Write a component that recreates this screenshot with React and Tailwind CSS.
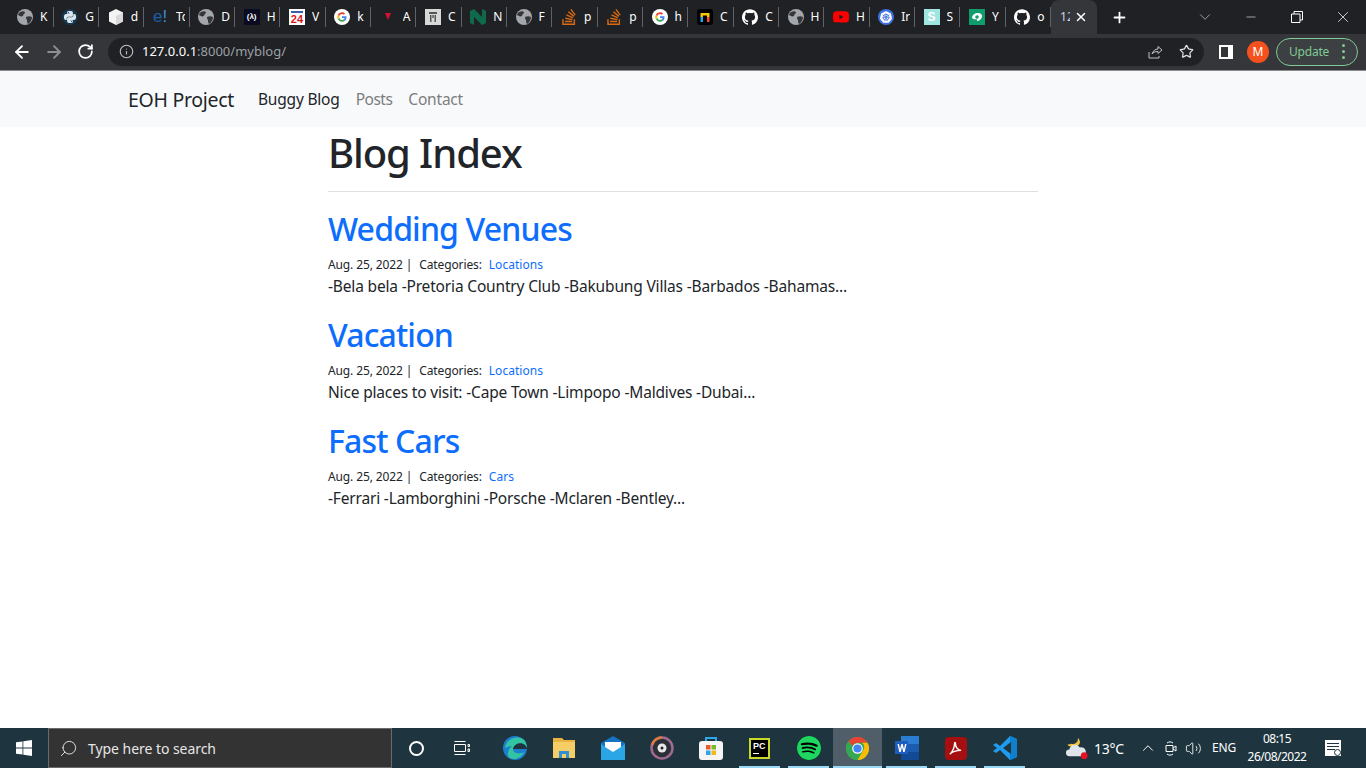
import React from 'react';
import { ArrowLeft, ArrowRight, RotateCw, Info, Star, ChevronDown, Minus, X, Plus, Search, ChevronUp, Volume2 } from 'lucide-react';
import { SiGithub, SiPython, SiStackoverflow, SiYoutube, SiKubernetes, SiSpotify } from 'react-icons/si';

const Globe = () => (
  <svg viewBox="0 0 16 16" className="h-4 w-4">
    <circle cx="8" cy="8" r="8" fill="#a3a6ab" />
    <path d="M3 3c2-1 4-1 5 0 0 2-2 2-2 4-2 1-3 0-5-1 0-1 1-2 2-3zM9 8c2-1 4-1 6 0 0 3-2 6-4 7-1-1-1-3-1-4-1-1-1-2-1-3z" fill="#35363a" />
  </svg>
);
const GoogleG = () => (
  <svg viewBox="0 0 16 16" className="h-4 w-4">
    <circle cx="8" cy="8" r="8" fill="#fff" />
    <path d="M12.5 8.2c0-.4 0-.7-.1-1H8v1.9h2.6c-.1.6-.5 1.1-1 1.5l1.5 1.2c.9-.9 1.4-2.1 1.4-3.6z" fill="#4285f4" />
    <path d="M8 12.8c1.3 0 2.3-.4 3.1-1.2l-1.5-1.2c-.4.3-1 .5-1.6.5-1.2 0-2.3-.8-2.6-2l-1.6 1.2c.8 1.6 2.4 2.7 4.2 2.7z" fill="#34a853" />
    <path d="M5.4 8.9c-.2-.6-.2-1.2 0-1.8L3.8 5.9c-.7 1.3-.7 2.9 0 4.2z" fill="#fbbc05" />
    <path d="M8 5.1c.7 0 1.3.2 1.8.7l1.3-1.3C10.3 3.700 9.200 3.200 8 3.200c-1.800 0-3.400 1.100-4.200 2.700l1.600 1.200c.3-1.200 1.400-2 2.600-2z" fill="#ea4335" />
  </svg>
);
const Cube = () => (
  <svg viewBox="0 0 16 16" className="h-4 w-4">
    <path d="M8 0l7 3.500v9L8 16l-7-3.500v-9z" fill="#f4f4f4" />
    <path d="M8 7l7-3.500v9L8 16z" fill="#d9d9d9" />
  </svg>
);
const Python = () => (
  <span className="flex h-4 w-4 items-center justify-center rounded-full bg-[#17374c]">
    <SiPython className="h-3 w-3 text-[#dbe7ef]" />
  </span>
);
const Eio = () => <span className="w-4 font-['Liberation_Sans',sans-serif] text-[17px] leading-4 text-[#1d5fa8]">e<span className="text-[#3f8fd2]">!</span></span>;
const Fcc = () => <span className="flex h-4 w-4 items-center justify-center bg-[#0a0a23] font-['Liberation_Sans',sans-serif] text-[8px] font-bold text-white">(λ)</span>;
const News24 = () => (
  <span className="flex h-4 w-4 flex-col items-center bg-white font-['Liberation_Sans',sans-serif] text-[11px] font-bold leading-[11px] text-[#d71920]">
    <span className="mb-px mt-[2px] h-[2px] w-3 bg-[#3a5fa8]" />24
  </span>
);
const RedMark = () => (
  <svg viewBox="0 0 16 16" className="h-4 w-4"><path d="M5 4h6l-3 7z" fill="#d5122f" /></svg>
);
const Mono = () => (
  <svg viewBox="0 0 16 16" className="h-4 w-4">
    <rect width="16" height="16" fill="#d8d8d8" />
    <path d="M4 3h8v2H4zM5 6h1.500v7H5zM9.500 6H11v7H9.500zM7.300 6h1.400v3H7.300z" fill="#555" />
  </svg>
);
const Nedbank = () => (
  <svg viewBox="0 0 16 16" className="h-4 w-4">
    <path d="M0 2l4-2 8 8V0l4 2v12l-4 2-8-8v8l-4-2z" fill="#0f6a4b" />
  </svg>
);
const Ninja = () => (
  <svg viewBox="0 0 16 16" className="h-4 w-4">
    <rect width="16" height="16" rx="3" fill="#000" />
    <path d="M3.500 8V4h9v4H10V6.500H6V8z" fill="#f7c600" />
    <path d="M3.500 13V8H6v5z" fill="#2aa7e0" />
    <path d="M10 13V8h2.500v5z" fill="#ef4d3c" />
  </svg>
);
const Kube = () => (
  <span className="flex h-4 w-4 items-center justify-center rounded-full bg-[#3d6fe0]">
    <SiKubernetes className="h-3 w-3 text-white" />
  </span>
);
const Sq = () => <span className="flex h-4 w-4 items-center justify-center bg-[#9fe6e0] font-['Liberation_Sans',sans-serif] text-xs font-bold text-white">S</span>;
const Yw = () => (
  <svg viewBox="0 0 16 16" className="h-4 w-4">
    <rect width="16" height="16" fill="#0f9d6c" />
    <path d="M3 9c0-3 3-5 6-5s4 2 4 3c0 3-3 5-5 5 0-1 0-2-1-2-1 1-3 0-4-1z" fill="#fff" />
    <circle cx="8" cy="8" r="1.800" fill="#0f9d6c" />
  </svg>
);
const Gh = () => <SiGithub className="h-4 w-4 text-white" />;
const So = () => <SiStackoverflow className="h-4 w-4 text-[#d96a14]" />;
const Yt = () => <SiYoutube className="h-4 w-4 text-[#f00]" />;

const tabs = [
  [Globe, 'K'], [Python, 'G'], [Cube, 'd'], [Eio, 'Tc'], [Globe, 'D'], [Fcc, 'H'], [News24, 'V'], [GoogleG, 'k'],
  [RedMark, 'A'], [Mono, 'C'], [Nedbank, 'N'], [Globe, 'F'], [So, 'p'], [So, 'p'], [GoogleG, 'h'], [Ninja, 'C'],
  [Gh, 'C'], [Globe, 'H'], [Yt, 'H'], [Kube, 'Ir'], [Sq, 'S'], [Yw, 'Y'], [Gh, 'o'],
];

function TabStrip() {
  return (
    <div className="flex h-[34px] items-stretch bg-[#202124]">
      <div className="w-[8.500px] shrink-0" />
      {tabs.map(([Icon, label], i) => (
        <div key={i} className="flex w-[45.330px] shrink-0 items-center pl-[8.500px]">
          <Icon />
          <span className="ml-[7px] w-[9px] overflow-hidden whitespace-nowrap text-xs text-white">{label}</span>
          <span className="ml-auto h-[20px] w-px bg-[#5f6368]" />
        </div>
      ))}
      <div className="flex w-[46px] shrink-0 items-center rounded-t-lg bg-[#35363a] pl-[9px]">
        <span className="w-[10px] overflow-hidden whitespace-nowrap text-xs text-[#c8d4e0]">127</span>
        <X className="ml-[4px] h-3.5 w-3.5 text-white" strokeWidth={2.500} />
      </div>
      <div className="flex w-[44px] shrink-0 items-center justify-center">
        <Plus className="h-[17px] w-[17px] text-white" strokeWidth={2.500} />
      </div>
      <div className="ml-auto flex">
        <div className="flex w-[46px] items-center justify-center"><ChevronDown className="h-[18px] w-[18px] text-[#c4c7c5]" strokeWidth={1} /></div>
        <div className="flex w-[46px] items-center justify-center"><Minus className="h-4 w-[14px] text-white" strokeWidth={1} /></div>
        <div className="flex w-[46px] items-center justify-center">
          <svg viewBox="0 0 12 12" className="h-3 w-3 fill-none stroke-white"><path d="M.5 3h8.500v8.500H.5zM3 3V.5h8.500V9H9" /></svg>
        </div>
        <div className="flex w-[46px] items-center justify-center"><X className="h-[18px] w-[18px] text-white" strokeWidth={1} /></div>
      </div>
    </div>
  );
}

function Toolbar() {
  return (
    <div className="flex h-[37px] items-center border-b border-[#8a8b8d] bg-[#35363a] pb-px">
      <div className="flex w-[108px] shrink-0 items-center pl-[12px]">
        <ArrowLeft className="h-[20px] w-[20px] text-white" strokeWidth={2.200} />
        <ArrowRight className="ml-[12px] h-[20px] w-[20px] text-[#8f9093]" strokeWidth={2.200} />
        <RotateCw className="ml-[13px] h-[17px] w-[17px] text-white" strokeWidth={2.500} />
      </div>
      <div className="flex h-[28px] w-[1096px] shrink-0 items-center rounded-full bg-[#202124] pl-[11px] pr-[10px]">
        <Info className="h-[15px] w-[15px] text-[#bdc1c6]" strokeWidth={1.800} />
        <span className="ml-[8px] text-[13px] text-[#9aa0a6]"><span className="text-white">127.0.0.1</span>:8000/myblog/</span>
        <svg viewBox="0 0 16 16" className="ml-auto h-4 w-4 fill-none stroke-[#bdc1c6]">
          <path d="M2 8v6h10v-2M5 10c1-3 3-5 6-5V2.500L15 6l-4 3.500V7.500c-3 0-5 1-6 2.500z" />
        </svg>
        <Star className="ml-[16px] h-[15px] w-[15px] text-[#dfe1e5]" strokeWidth={2} />
      </div>
      <div className="ml-[15px] h-[14px] w-[14px] shrink-0 border-2 border-r-[5px] border-white" />
      <div className="ml-[14px] flex h-[22px] w-[22px] shrink-0 items-center justify-center rounded-full bg-[#f4511e] text-xs text-white">M</div>
      <div className="ml-[7px] flex h-[28px] w-[82px] shrink-0 items-center rounded-full border border-[#81c995] bg-[#3c4043] pl-[12px] text-xs tracking-[-0.2px] text-[#81c995]">
        Update
        <span className="ml-[13px] flex flex-col gap-[3px]">
          <span className="h-[3px] w-[3px] rounded-full bg-[#81c995]" />
          <span className="h-[3px] w-[3px] rounded-full bg-[#81c995]" />
          <span className="h-[3px] w-[3px] rounded-full bg-[#81c995]" />
        </span>
      </div>
    </div>
  );
}

const posts = [
  ['Wedding Venues', 'Locations', '-Bela bela -Pretoria Country Club -Bakubung Villas -Barbados -Bahamas...'],
  ['Vacation', 'Locations', 'Nice places to visit: -Cape Town -Limpopo -Maldives -Dubai...'],
  ['Fast Cars', 'Cars', '-Ferrari -Lamborghini -Porsche -Mclaren -Bentley...'],
];

function Page() {
  return (
    <div className="min-h-0 flex-1 bg-white font-['Noto_Sans','Open_Sans',sans-serif] text-[#212529]">
      <nav className="flex h-[56px] items-center bg-[#f8f9fa] pl-[128px] pt-[2px]">
        <span className="text-[19.500px] tracking-[-0.3px] text-[#212529]">EOH Project</span>
        <span className="ml-[24px] text-[15.500px] tracking-[-0.2px] text-[#212529]">Buggy Blog</span>
        <span className="ml-[16px] text-[15.500px] tracking-[-0.5px] text-[#7c7d7e]">Posts</span>
        <span className="ml-[16px] text-[15.500px] tracking-[-0.2px] text-[#7c7d7e]">Contact</span>
      </nav>
      <main className="ml-[328px] w-[710px]">
        <h1 className="h-[65px] border-b border-[#dfdfdf] text-[40px] font-medium leading-[52px] tracking-[-1.100px]">Blog Index</h1>
        <div className="pt-[14px]">
          {posts.map(([title, cat, body]) => (
            <article key={title} className="h-[106px]">
              <h2 className="h-[46px] text-[32px] font-medium leading-[46px] tracking-[-0.850px] text-[#0d6efd]">{title}</h2>
              <div className="flex h-[24px] items-center pt-[2px] text-[12px] tracking-[-0.120px]">
                Aug. 25, 2022 |
                <span className="ml-[7px]">Categories:</span>
                <span className="ml-[7px] tracking-[0.030px] text-[#0d6efd]">{cat}</span>
              </div>
              <p className="text-[15.500px] leading-[20px] tracking-[-0.170px]">{body}</p>
            </article>
          ))}
        </div>
      </main>
    </div>
  );
}

const WinLogo = () => (
  <svg viewBox="0 0 16 16" className="h-4 w-4 fill-white">
    <path d="M0 2.300l6.500-.9v6.200H0zM7.300 1.300L16 0v7.600H7.300zM0 8.400h6.500v6.200L0 13.700zM7.300 8.400H16V16l-8.700-1.300z" />
  </svg>
);

const Edge = () => (
  <svg viewBox="0 0 24 24" className="h-6 w-6">
    <circle cx="12" cy="12" r="12" fill="#1b7fd0" />
    <path d="M2 12C3 4 12-1 20 3c3 2 4 6 4 10H10c0 4 6 6 11 3-2 5-9 9-14 6C3 20 5 13 9 10c-3 0-5 1-7 2z" fill="#34c4a4" />
    <path d="M10 13h14c0-2-1-3-2-4-3-3-11-2-12 4z" fill="#1e3540" />
  </svg>
);
const Explorer = () => (
  <svg viewBox="0 0 22 20" className="h-5 w-[22px]">
    <path d="M0 0h9l2 2h11v18H0z" fill="#e8b33e" />
    <path d="M0 4h22v16H0z" fill="#f5cf66" />
    <path d="M6 13h10v7H6z" fill="#2f8fd8" />
    <path d="M9 16h4v4H9z" fill="#f5cf66" />
  </svg>
);
const Mail = () => (
  <svg viewBox="0 0 24 24" className="h-6 w-6">
    <path d="M0 7l12-7 12 7v17H0z" fill="#1473c4" />
    <path d="M0 8l12 8 12-8v16H0z" fill="#2aa5e6" />
    <path d="M4 6h16v5l-8 5-8-5z" fill="#fff" />
  </svg>
);
const Groove = () => (
  <svg viewBox="0 0 24 24" className="h-6 w-6">
    <circle cx="12" cy="12" r="10.500" fill="#2b3038" stroke="#a06a8f" strokeWidth="2.500" />
    <path d="M12 1.500A10.500 10.500 0 0 0 2 9" fill="none" stroke="#e07b3a" strokeWidth="2.500" />
    <circle cx="12" cy="12" r="4.500" fill="#e8e8e8" />
    <circle cx="12" cy="12" r="1.500" fill="#222" />
  </svg>
);
const Store = () => (
  <svg viewBox="0 0 24 24" className="h-[26px] w-6">
    <path d="M7 6V2h10v4" fill="none" stroke="#2ea6e8" strokeWidth="2" />
    <rect y="5" width="24" height="19" rx="3" fill="#f5f5f5" />
    <path d="M7 9h4.500v4.500H7z" fill="#e85c2c" />
    <path d="M12.500 9H17v4.500h-4.500z" fill="#7cb82c" />
    <path d="M7 14.500h4.500V19H7z" fill="#2ea6e8" />
    <path d="M12.500 14.500H17V19h-4.500z" fill="#f5b81c" />
  </svg>
);
const PyCharm = () => (
  <span className="relative h-[21px] w-[21px] border-[2px] border-[#c8d92a] bg-black font-['Liberation_Sans',sans-serif] text-[9px] font-bold leading-[12px] text-white">
    <span className="absolute left-[2px] top-0">PC</span>
    <span className="absolute bottom-[3px] left-[2px] h-[1px] w-[6px] bg-white" />
  </span>
);
const Word = () => (
  <svg viewBox="0 0 24 24" className="h-6 w-6">
    <path d="M6 0h18v24H6z" fill="#2b7cd3" />
    <path d="M6 8h18v8H6z" fill="#1c5cb0" />
    <path d="M6 16h18v8H6z" fill="#134a96" />
    <rect y="5" width="13" height="13" fill="#1d5dc0" />
    <path d="M2.500 8h1.500l1 5 1.300-5h1.400L9 13l1-5h1.500l-1.800 8H8.200L7 11l-1.200 5H4.300z" fill="#fff" />
  </svg>
);
const Acrobat = () => (
  <span className="flex h-[23px] w-[22px] items-center justify-center rounded-[4px] bg-[#a50f0f]">
    <svg viewBox="0 0 16 16" className="h-[15px] w-[15px] fill-none stroke-white stroke-[1.500]">
      <path d="M2 14c2-1 5-7 5-11 0-2 1-2 1 0 0 4 3 7 6 7-4 0-9 1-12 4z" />
    </svg>
  </span>
);
const VsCode = () => (
  <svg viewBox="0 0 24 24" className="h-6 w-6">
    <path d="M17 0l7 3v18l-7 3-10-10-4 3-3-2 4-3-4-3 3-2 4 3z" fill="#1f9cf0" />
    <path d="M17 0l7 3v18l-7 3z" fill="#0f80cc" />
    <path d="M18 6v12l-8-6z" fill="#1e3540" />
  </svg>
);
const Chrome = () => (
  <svg viewBox="0 0 24 24" className="h-[23px] w-[23px]">
    <circle cx="12" cy="12" r="12" fill="#34a853" />
    <path d="M12 0a12 12 0 0 1 10.400 6H12a6 6 0 0 0-5.200 3L2.600 4.500A12 12 0 0 1 12 0z" fill="#ea4335" />
    <path d="M22.400 6A12 12 0 0 1 12 24l5.200-9a6 6 0 0 0-.4-9z" fill="#fbbc05" />
    <path d="M2.600 4.500L6.800 15A6 6 0 0 0 12 18l-1 6A12 12 0 0 1 2.600 4.500z" fill="#34a853" />
    <circle cx="12" cy="12" r="5.500" fill="#fff" />
    <circle cx="12" cy="12" r="4.300" fill="#4285f4" />
  </svg>
);
const Spotify = () => (
  <span className="flex h-6 w-6 items-center justify-center rounded-full bg-black">
    <SiSpotify className="h-6 w-6 text-[#1ed760]" />
  </span>
);

const apps = [
  [Edge, false], [Explorer, false], [Mail, false], [Groove, false], [Store, false], [PyCharm, true],
  [Spotify, true], [Chrome, true], [Word, true], [Acrobat, true], [VsCode, true],
];

function Taskbar() {
  return (
    <div className="flex h-[40px] shrink-0 items-stretch bg-[#1e3540] font-['Noto_Sans','Open_Sans',sans-serif] text-white">
      <div className="flex w-[48px] shrink-0 items-center justify-center"><WinLogo /></div>
      <div className="flex w-[344px] shrink-0 items-center border border-[#6b6b6b] bg-[#333] pl-[10px] text-[14px] tracking-[-0.050px] text-[#e6e6e6]">
        <Search className="h-[19px] w-[19px] -scale-x-100" strokeWidth={1.200} />
        <span className="ml-[10px]">Type here to search</span>
      </div>
      <div className="flex w-[49px] shrink-0 items-center justify-center">
        <span className="h-[15px] w-[15px] rounded-full border-[2px] border-white" />
      </div>
      <div className="flex w-[49px] shrink-0 items-center justify-center pr-[8px]">
        <svg viewBox="0 0 16 16" className="h-4 w-4 fill-none stroke-white">
          <path d="M.5 4.500h11v7H.5zM.5 1.500h11M.5 14.500h11M14 4.500h1.500v2H14z" />
          <path d="M14 9h1.500v2.500H14z" />
        </svg>
      </div>
      {apps.map(([Icon, open], i) => (
        <div key={i} className={`relative flex w-[49px] shrink-0 items-center justify-center ${i === 7 ? 'bg-[#4f5e68]' : ''}`}>
          <Icon />
          {open && <span className={`absolute bottom-0 h-[2px] bg-[#9ad9f5] ${i === 7 ? 'inset-x-0' : 'inset-x-[4px]'}`} />}
        </div>
      ))}
      <div className="ml-auto flex items-center">
        <svg viewBox="0 0 24 24" className="h-[23px] w-[24px]">
          <path d="M13 1a5.500 5.500 0 0 1-7 6L2 8c2 3 9 3 12 0 2-2 1-5-1-7z" fill="#f5c542" />
          <path d="M4 20a3.500 3.500 0 0 1 0-7 6 6 0 0 1 11-2 4.500 4.500 0 0 1 3 9z" fill="#dfe5ea" />
          <circle cx="19.500" cy="19.500" r="3.500" fill="#e81123" />
        </svg>
        <span className="ml-[5px] w-[42px] text-[14px] tracking-[-0.3px]">13°C</span>
        <ChevronUp className="ml-[3px] h-[18px] w-[18px]" strokeWidth={1.300} />
        <svg viewBox="0 0 16 16" className="ml-[6px] h-4 w-4 fill-none stroke-white">
          <path d="M3 5.500h7v6H3zM10 8l3-2v5l-3-2M4 3c2-1.500 4-1.500 6 0M4 14c2 1.500 4 1.500 6 0" />
        </svg>
        <Volume2 className="ml-[6px] h-[17px] w-[17px]" strokeWidth={1.200} />
        <span className="ml-[10px] text-[12px] tracking-[-0.2px]">ENG</span>
        <span className="ml-[1px] flex w-[80px] flex-col items-center text-[12px] leading-[18px] tracking-[-0.5px]">
          <span>08:15</span>
          <span>26/08/2022</span>
        </span>
        <span className="relative mx-[25px] ml-[8px] flex h-[16px] w-[16px] flex-col gap-[2px] bg-white px-[2px] py-[3px]">
          <span className="h-px w-full bg-[#1e3540]" />
          <span className="h-px w-full bg-[#1e3540]" />
          <span className="h-px w-2/3 bg-[#1e3540]" />
          <span className="absolute bottom-0 right-0 h-[7px] w-[7px] rounded-full border border-[#1e3540] bg-white" />
        </span>
      </div>
    </div>
  );
}

export default function App() {
  return (
    <div className="flex h-[768px] w-[1366px] flex-col overflow-hidden font-['Noto_Sans','Open_Sans',sans-serif]">
      <TabStrip />
      <Toolbar />
      <Page />
      <Taskbar />
    </div>
  );
}
